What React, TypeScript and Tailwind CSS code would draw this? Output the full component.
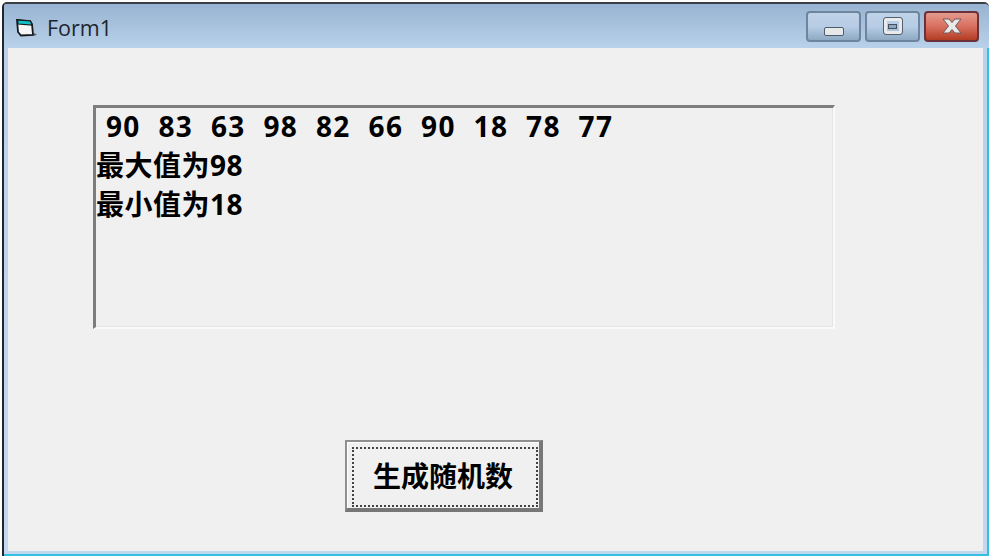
export default function App() {
  const font = { fontFamily: '"Noto Sans", "Noto Sans CJK SC", sans-serif' };
  return (
    <div className="w-[989px] h-[556px] bg-white overflow-hidden">
      <div className="w-[989px] h-[556px] pl-[2px] pt-[2px] bg-[#fdfdfd]">
        <div className="w-[987px] h-[554px] flex flex-col rounded-t-[5px] border-t-2 border-l-2 border-t-[#3a3f45] border-l-[#22262b] bg-[#b9d1ea] overflow-hidden">
          <div className="h-[44px] shrink-0 flex items-center pl-[11px] pr-[6px] bg-gradient-to-b from-[#98b4d2] to-[#b9d1ea]">
            <div className="flex items-center pt-[3px]">
              <svg width="24" height="22" viewBox="0 0 24 22" className="shrink-0">
                <path d="M2 3 L15 4 L17 7 L18 18 L6 18.5 L3 15 Z" fill="#f6f6f6" stroke="#15181c" strokeWidth="1.8" />
                <path d="M2.5 3 L15.5 4 L17 8 L3 7 Z" fill="#13c0c6" stroke="#15181c" strokeWidth="1.2" />
                <path d="M19 16 L22 17.5 L19 19 Z" fill="#5a6470" />
              </svg>
              <span className="ml-[8px] text-[21.5px] leading-none text-[#1c2530]" style={{ fontFamily: '"Open Sans", sans-serif' }}>Form1</span>
            </div>
            <div className="ml-auto flex items-start gap-[4px] mr-[4px]">
              <div className="w-[55px] h-[31px] rounded-[4px] border-2 border-[#6f859d] flex items-center justify-center bg-gradient-to-b from-[#bed2e8] via-[#b7cde5] to-[#8fa9c4]">
                <div className="w-[20px] h-[9px] mt-[10px] rounded-[2px] border border-[#4f5b68] bg-[#e6e8ea]" />
              </div>
              <div className="w-[55px] h-[31px] rounded-[4px] border-2 border-[#6f859d] flex items-center justify-center bg-gradient-to-b from-[#bed2e8] via-[#b7cde5] to-[#8fa9c4]">
                <div className="w-[18px] h-[16px] rounded-[2px] border-[3px] border-[#e8eaec] outline outline-1 outline-[#56616d] flex items-center justify-center">
                  <div className="w-[9px] h-[5px] bg-[#8ea6c0] border border-[#46515d]" />
                </div>
              </div>
              <div className="w-[55px] h-[31px] rounded-[4px] border-2 border-[#6b3138] flex items-center justify-center bg-gradient-to-b from-[#e39a8e] via-[#d86f5e] to-[#b23c22]">
                <svg width="22" height="18" viewBox="0 0 22 18">
                  <path d="M2 2 H8 L11 5.5 L14 2 H20 L14.5 9 L20 16 H14 L11 12.5 L8 16 H2 L7.5 9 Z" fill="#e9e9e9" stroke="#6e5a58" strokeWidth="1" />
                </svg>
              </div>
            </div>
          </div>
          <div className="flex-1 min-h-0 flex flex-col pl-[4px] pr-[4px] pb-[3px] bg-gradient-to-b from-[#b9d1ea] to-[#c3d8ee] border-r-2 border-b-2 border-r-[#32bfe0] border-b-[#32bfe0]">
            <div className="flex-1 min-h-0 flex flex-col items-start bg-[#f0f0f0] pl-[85px] pt-[57px]" style={font}>
              <div className="w-[742px] h-[224px] shrink-0 border-t-[3px] border-l-[3px] border-t-[#7d7d7d] border-l-[#7d7d7d] border-r-2 border-b-2 border-r-[#fafafa] border-b-[#fafafa] shadow-[inset_-1px_-1px_0_#e4e4e4] text-[28px] font-bold leading-[39px] text-black">
                <div className="whitespace-pre tracking-[1.3px] [word-spacing:9.3px] pl-[10px] -mt-[1px]">90 83 63 98 82 66 90 18 78 77</div>
                <div className="whitespace-pre tracking-[0.5px]">最大值为98</div>
                <div className="whitespace-pre tracking-[0.5px]">最小值为18</div>
              </div>
              <button className="ml-[252px] mt-[111px] w-[198px] h-[72px] shrink-0 border-t-2 border-l-2 border-t-[#8f8f8f] border-l-[#8f8f8f] border-r-[4px] border-b-[4px] border-r-[#777777] border-b-[#777777] bg-[#f0f0f0] pt-[5px] pl-[5px] pr-[1px] pb-[1px] shadow-[inset_1px_1px_0_#ffffff]">
                <div className="w-full h-full pr-[4px] pb-[2px] border-2 border-dotted border-[#444444] flex items-center justify-center text-[28px] font-bold text-black leading-none">
                  生成随机数
                </div>
              </button>
            </div>
          </div>
        </div>
      </div>
    </div>
  );
}
